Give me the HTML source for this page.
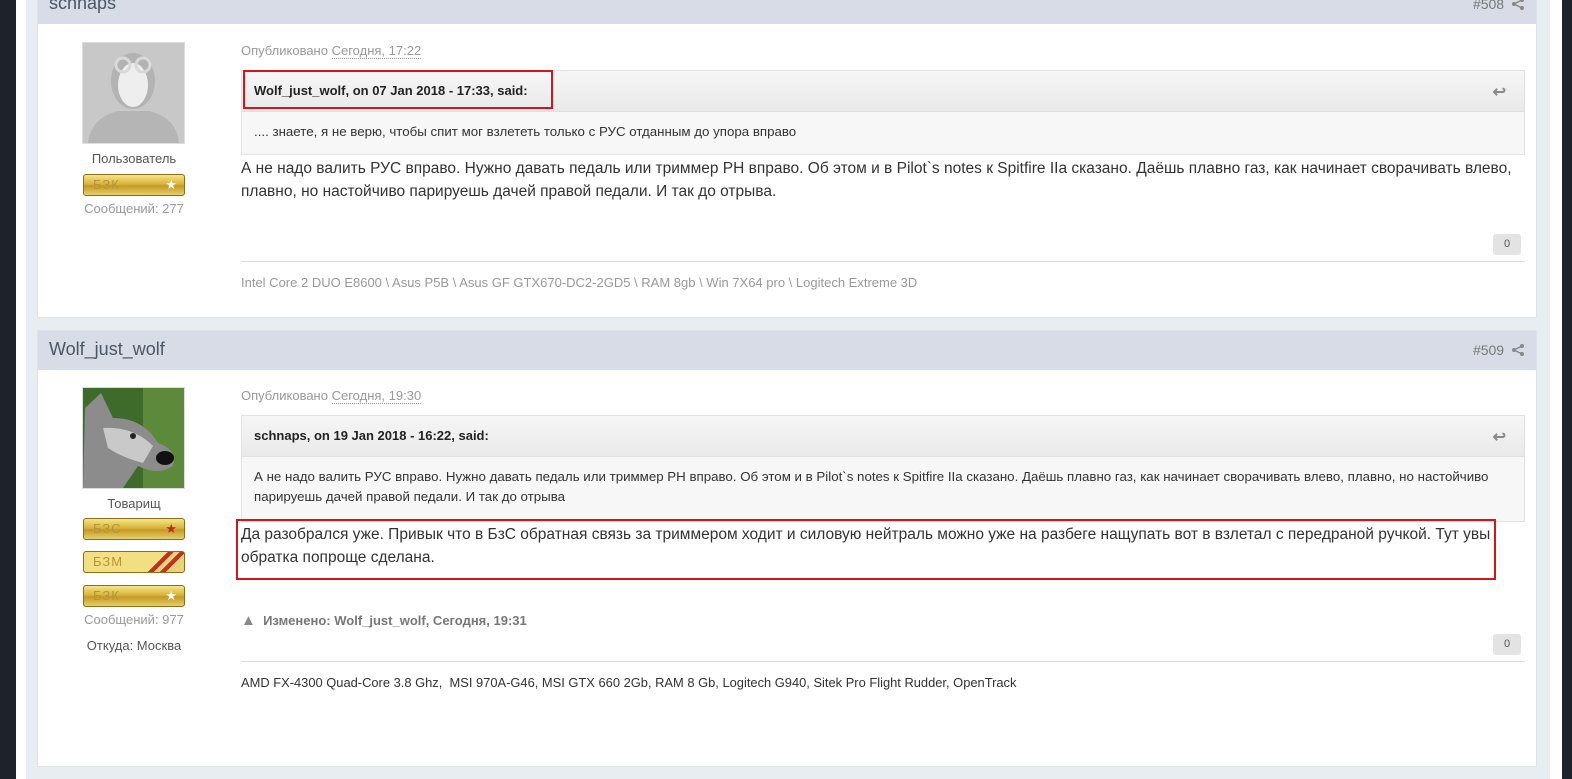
<!DOCTYPE html>
<html><head><meta charset="utf-8"><style>
*{margin:0;padding:0;box-sizing:border-box}
body{width:1572px;height:779px;overflow:hidden;background:#1e232b;font-family:"Liberation Sans",sans-serif;position:relative;color:#333}
.a{position:absolute}
.panel{left:26px;top:0;width:1524px;height:779px;background:#e8edf1}
.wl{left:16px;top:0;width:10px;height:779px;background:#fff}
.wr{left:1550px;top:0;width:12px;height:779px;background:#fff}
.post{left:37px;width:1500px;background:#fff;border:1px solid #dde3e9}
.hdr{left:38px;width:1498px;height:39px;background:#d7dce6}
.hdr .n{position:absolute;left:11px;top:8px;font-size:18px;color:#4c5664}
.hdr .r{position:absolute;right:12px;top:11px;font-size:14px;color:#777}
.meta{font-size:13px;color:#999}
.meta u{text-decoration:none;border-bottom:1px dotted #999}
.q{left:241px;width:1284px;border:1px solid #e2e2e2;background:#f7f7f7}
.qh{height:41px;background:linear-gradient(#f6f6f6,#e9e9e9);border-bottom:1px solid #e0e0e0;font-size:13px;font-weight:bold;color:#222;padding:12px 0 0 12px;position:relative}
.qb{font-size:13.3px;line-height:20px;color:#333;padding:10px 12px}
.txt{font-size:15.5px;line-height:23px;color:#333}
.red{border:2px solid #d7131b}
.badge{left:83px;width:102px;height:22px;border-radius:3px;background:linear-gradient(#f6e58b,#d8b43a 45%,#c49a25 55%,#e7cf6a);border:1px solid #8e6c18;font-size:13px;color:#b6953a;padding:2px 0 0 9px;letter-spacing:1px}
.sm{font-size:13px;text-align:center;width:150px;left:59px}
.zero{width:28px;height:21px;background:#e3e3e3;border-radius:3px;font-size:11px;color:#555;text-align:center;line-height:21px}
.line{height:1px;background:#ddd;left:241px;width:1284px}
.sig{font-size:13px;left:241px}
</style></head><body>
<div class="a panel"></div><div class="a wl"></div><div class="a wr"></div>

<div class="a post" style="top:0;height:318px"></div>
<div class="a hdr" style="top:-15px"><div class="n">schnaps</div><div class="r">#508 <svg width="12" height="12" viewBox="0 0 12 12" style="vertical-align:-1px;margin-left:4px"><circle cx="10" cy="2" r="2" fill="#888"/><circle cx="10" cy="10" r="2" fill="#888"/><circle cx="2" cy="6" r="2" fill="#888"/><path d="M10 2L2 6L10 10" stroke="#888" stroke-width="1.5" fill="none"/></svg></div></div>
<div class="a" style="left:82px;top:42px;width:103px;height:102px;border:1px solid #ddd;background:#c7c7c7;overflow:hidden">
<svg width="101" height="100" viewBox="0 0 101 100"><rect width="101" height="100" fill="#c8c8c8"/><path d="M5 100 Q8 75 35 68 L66 68 Q94 75 96 100Z" fill="#b5b5b5"/><ellipse cx="50" cy="38" rx="22" ry="28" fill="#b3b3b3"/><ellipse cx="50" cy="42" rx="15" ry="22" fill="#eee"/><circle cx="40" cy="22" r="7" fill="none" stroke="#d9d9d9" stroke-width="3"/><circle cx="60" cy="22" r="7" fill="none" stroke="#d9d9d9" stroke-width="3"/></svg></div>
<div class="a sm" style="top:151px;color:#555">Пользователь</div>
<div class="a badge" style="top:174px">БЗК <span style="float:right;margin-right:6px;color:#fff">★</span></div>
<div class="a sm" style="top:201px;color:#999">Сообщений: 277</div>

<div class="a meta" style="left:241px;top:43px">Опубликовано <u>Сегодня, 17:22</u></div>
<div class="a q" style="top:70px;height:85px"><div class="qh">Wolf_just_wolf, on 07 Jan 2018 - 17:33, said:<span style="position:absolute;right:18px;top:11px;color:#888;font-size:16px">↩</span></div><div class="qb">.... знаете, я не верю, чтобы спит мог взлететь только с РУС отданным до упора вправо</div></div>
<div class="a red" style="left:243px;top:70px;width:310px;height:39px"></div>
<div class="a txt" style="left:241px;top:157px;width:1290px">А не надо валить РУС вправо. Нужно давать педаль или триммер РН вправо. Об этом и в Pilot`s notes к Spitfire IIa сказано. Даёшь плавно газ, как начинает сворачивать влево, плавно, но настойчиво парируешь дачей правой педали. И так до отрыва.</div>
<div class="a zero" style="left:1493px;top:234px">0</div>
<div class="a line" style="top:261px"></div>
<div class="a sig" style="top:275px;color:#999">Intel Core 2 DUO E8600 \ Asus P5B \ Asus GF GTX670-DC2-2GD5 \ RAM 8gb \ Win 7X64 pro \ Logitech Extreme 3D</div>

<div class="a post" style="top:330px;height:437px"></div>
<div class="a hdr" style="top:331px"><div class="n">Wolf_just_wolf</div><div class="r">#509 <svg width="12" height="12" viewBox="0 0 12 12" style="vertical-align:-1px;margin-left:4px"><circle cx="10" cy="2" r="2" fill="#888"/><circle cx="10" cy="10" r="2" fill="#888"/><circle cx="2" cy="6" r="2" fill="#888"/><path d="M10 2L2 6L10 10" stroke="#888" stroke-width="1.5" fill="none"/></svg></div></div>
<div class="a" style="left:82px;top:387px;width:103px;height:102px;border:1px solid #ddd;overflow:hidden">
<svg width="101" height="100" viewBox="0 0 101 100"><rect width="101" height="100" fill="#3f6b2a"/><rect x="60" width="41" height="100" fill="#5c8a3a"/><path d="M2 20 L18 5 L30 30 Q60 30 75 55 Q95 62 90 78 Q75 88 55 78 L40 100 L0 100Z" fill="#8c8c8c"/><path d="M20 40 Q50 38 70 58 L60 75 Q40 70 25 60Z" fill="#c9c9c9"/><ellipse cx="82" cy="70" rx="9" ry="7" fill="#111"/><circle cx="50" cy="48" r="3" fill="#222"/></svg></div>
<div class="a sm" style="top:496px;color:#555">Товарищ</div>
<div class="a badge" style="top:518px">БЗС <span style="float:right;margin-right:6px;color:#c0262a">★</span></div>
<div class="a badge" style="top:551px;background:linear-gradient(135deg,#f2df82 70%,#b32 70%,#b32 75%,#e8d27a 75%,#e8d27a 80%,#b32 80%,#b32 85%,#e8d27a 85%)">БЗМ</div>
<div class="a badge" style="top:585px">БЗК <span style="float:right;margin-right:6px;color:#fff">★</span></div>
<div class="a sm" style="top:612px;color:#999">Сообщений: 977</div>
<div class="a sm" style="top:638px;color:#555">Откуда: Москва</div>

<div class="a meta" style="left:241px;top:388px">Опубликовано <u>Сегодня, 19:30</u></div>
<div class="a q" style="top:415px;height:107px"><div class="qh">schnaps, on 19 Jan 2018 - 16:22, said:<span style="position:absolute;right:18px;top:11px;color:#888;font-size:16px">↩</span></div><div class="qb">А не надо валить РУС вправо. Нужно давать педаль или триммер РН вправо. Об этом и в Pilot`s notes к Spitfire IIa сказано. Даёшь плавно газ, как начинает сворачивать влево, плавно, но настойчиво парируешь дачей правой педали. И так до отрыва</div></div>
<div class="a txt" style="left:241px;top:523px;width:1250px">Да разобрался уже. Привык что в БзС обратная связь за триммером ходит и силовую нейтраль можно уже на разбеге нащупать вот в взлетал с передраной ручкой. Тут увы обратка попроще сделана.</div>
<div class="a red" style="left:236px;top:519px;width:1260px;height:61px"></div>
<div class="a" style="left:241px;top:612px;font-size:13px;font-weight:bold;color:#777"><span style="font-size:15px;color:#888">▲</span>&nbsp; Изменено: Wolf_just_wolf, Сегодня, 19:31</div>
<div class="a zero" style="left:1493px;top:634px">0</div>
<div class="a line" style="top:661px"></div>
<div class="a sig" style="top:675px;color:#333;font-size:12.9px">AMD FX-4300 Quad-Core 3.8 Ghz,&nbsp; MSI 970A-G46, MSI GTX 660 2Gb, RAM 8 Gb, Logitech G940, Sitek Pro Flight Rudder, OpenTrack</div>
</body></html>
